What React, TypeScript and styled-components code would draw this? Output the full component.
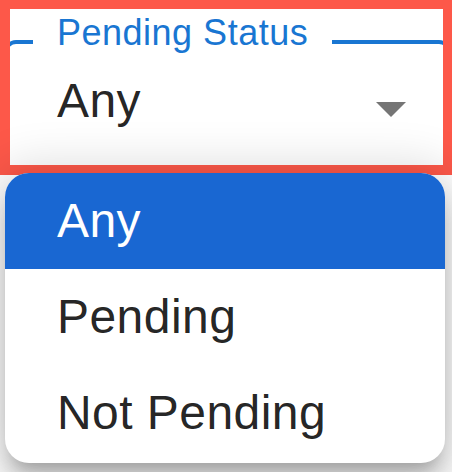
import styled, { createGlobalStyle } from "styled-components";

const GlobalStyle = createGlobalStyle`
  html, body {
    margin: 0;
    padding: 0;
    background: #ffffff;
  }
  body {
    font-family: "Liberation Sans", Arial, sans-serif;
    width: 452px;
    height: 472px;
    overflow: hidden;
  }
`;

const options = ["Any", "Pending", "Not Pending"];

export default function App() {
  const selected = "Any";

  return (
    <>
      <GlobalStyle />
      <SC_Page>
        <SC_Field>
          <SC_Legend>Pending Status</SC_Legend>
          <SC_ValueRow>
            <SC_Value>{selected}</SC_Value>
            <svg width="72" height="72" viewBox="0 0 24 24">
              <path d="M7 10l5 5 5-5z" fill="#757575" />
            </svg>
          </SC_ValueRow>
        </SC_Field>

        <SC_Highlight />

        <SC_Menu>
          {options.map((opt) => (
            <SC_MenuItem key={opt} active={opt === selected}>
              {opt}
            </SC_MenuItem>
          ))}
        </SC_Menu>
      </SC_Page>
    </>
  );
}

const SC_Page = styled.div`
  position: relative;
  width: 452px;
  height: 472px;
  padding-top: 15px;
  box-sizing: border-box;
`;

const SC_Field = styled.fieldset`
  margin: 0 1px 0 4px;
  padding: 0 0 40px 0;
  border: 4px solid #1976d2;
  border-radius: 12px;
  min-width: 0;
`;

const SC_Legend = styled.legend`
  margin-left: 25px;
  padding: 0 24px 17px 24px;
  font-size: 36px;
  line-height: 36px;
  letter-spacing: 0.5px;
  color: #1976d2;
`;

const SC_ValueRow = styled.div`
  display: flex;
  align-items: center;
  justify-content: space-between;
  height: 56px;
  margin-top: 5px;
  padding: 0 20px 0 49px;

  svg {
    margin-top: 14px;
  }
`;

const SC_Value = styled.span`
  font-size: 48px;
  line-height: 56px;
  letter-spacing: 0.45px;
  color: rgba(0, 0, 0, 0.87);
`;

const SC_Highlight = styled.div`
  position: absolute;
  top: 0;
  left: 0;
  width: 452px;
  height: 175px;
  box-sizing: border-box;
  border-style: solid;
  border-color: #fd5849;
  border-width: 9px 9px 10px 10px;
  pointer-events: none;
`;

const SC_Menu = styled.ul`
  position: absolute;
  top: 173px;
  left: 5px;
  width: 440px;
  height: 290px;
  margin: 0;
  padding: 0;
  list-style: none;
  background: #ffffff;
  border-radius: 24px;
  overflow: hidden;
  box-shadow: 0px 15px 15px -9px rgba(0, 0, 0, 0.2),
    0px 24px 30px 3px rgba(0, 0, 0, 0.14),
    0px 0px 48px 8px rgba(0, 0, 0, 0.14);
`;

const SC_MenuItem = styled.li<{ active?: boolean }>`
  height: 96px;
  display: flex;
  align-items: center;
  padding-left: 52px;
  font-size: 48px;
  line-height: 96px;
  letter-spacing: 0.45px;
  background: ${(p) => (p.active ? "#1967d2" : "transparent")};
  color: ${(p) => (p.active ? "#ffffff" : "rgba(0, 0, 0, 0.87)")};
`;
